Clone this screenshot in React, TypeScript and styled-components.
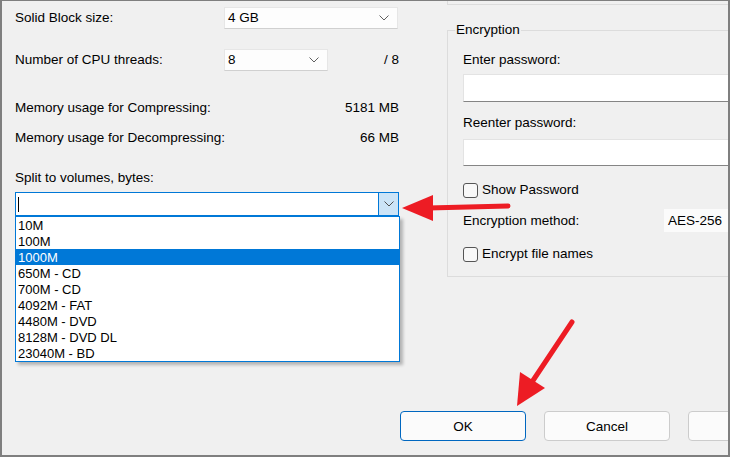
import React from "react";
import styled, { createGlobalStyle } from "styled-components";

const Global = createGlobalStyle`
  html, body { margin: 0; padding: 0; background: #f0f0f0; }
  * { box-sizing: border-box; }
`;

const Frame = styled.div`
  position: relative;
  width: 730px;
  height: 457px;
  overflow: hidden;
  background: #f0f0f0;
  border-style: solid;
  border-color: #7f7f7f;
  border-width: 1px 2px 2px 2px;
  font-family: "Liberation Sans", Arial, sans-serif;
  font-size: 13.5px;
  color: #000;
  display: flex;
  flex-direction: column;
`;

const Body = styled.div`
  display: flex;
  flex: 1;
`;

const LeftCol = styled.div`
  width: 384px;
  margin-left: 13px;
  padding-top: 6px;
  display: flex;
  flex-direction: column;
`;

const FieldRow = styled.div<{ $top: number }>`
  display: grid;
  grid-template-columns: 209px auto 1fr;
  align-items: center;
  height: 22px;
  margin-top: ${(p) => p.$top}px;
`;

const Label = styled.div`
  line-height: 16px;
  white-space: nowrap;
`;

const Select = styled.div<{ $w: number }>`
  width: ${(p) => p.$w}px;
  height: 22px;
  background: #fdfdfd;
  border: 1px solid #e6e6e6;
  border-bottom-color: #d0d0d0;
  display: flex;
  align-items: center;
  justify-content: space-between;
  padding: 0 8px 0 3px;
  line-height: 16px;
`;

const RightValue = styled.div`
  text-align: right;
  line-height: 16px;
`;

const InfoRow = styled.div<{ $top: number }>`
  display: flex;
  justify-content: space-between;
  height: 16px;
  line-height: 16px;
  margin-top: ${(p) => p.$top}px;
`;

const SectionLabel = styled(Label)`
  margin-top: 24px;
`;

const Combo = styled.div`
  margin-top: 6px;
  height: 24px;
  border: 1px solid #0078d7;
  background: #fff;
  display: flex;
  align-items: center;
`;

const Caret = styled.span`
  width: 1px;
  height: 15px;
  background: #000;
  margin-left: 2px;
`;

const ComboButton = styled.div`
  margin-left: auto;
  width: 20px;
  height: 22px;
  background: #cce4f7;
  border-left: 1px solid #0078d7;
  display: flex;
  align-items: center;
  justify-content: center;
`;

const List = styled.div`
  width: 385px;
  height: 146px;
  border: 1px solid #0078d7;
  background: #fff;
  box-shadow: 3px 3px 3px rgba(0, 0, 0, 0.25);
  font-size: 13px;
`;

const Item = styled.div<{ $sel?: boolean }>`
  height: 16px;
  line-height: 15px;
  padding: 1px 0 0 2px;
  background: ${(p) => (p.$sel ? "#0078d7" : "transparent")};
  color: ${(p) => (p.$sel ? "#fff" : "#000")};
`;

const RightCol = styled.div`
  margin-left: 48px;
  flex: 1;
  display: flex;
  flex-direction: column;
`;

const PrevGroup = styled.div`
  width: 400px;
  height: 4px;
  border-left: 1px solid #dcdcdc;
  border-bottom: 1px solid #dcdcdc;
`;

const Group = styled.fieldset`
  margin: 17px 0 0 0;
  width: 400px;
  min-width: 0;
  border: 1px solid #dcdcdc;
  padding: 0 15px 14px 15px;
  display: flex;
  flex-direction: column;
`;

const Legend = styled.legend`
  padding: 0 1px;
  margin-left: -8px;
  line-height: 16px;
`;

const GroupLabel = styled.div<{ $top: number }>`
  line-height: 16px;
  padding-top: 1px;
  height: 16px;
  margin-top: ${(p) => p.$top}px;
`;

const TextInput = styled.div<{ $top: number; $h: number }>`
  margin-top: ${(p) => p.$top}px;
  height: ${(p) => p.$h}px;
  background: #fff;
  border: 1px solid #e3e3e3;
  border-bottom-color: #858585;
`;

const CheckRow = styled.div<{ $top: number }>`
  margin-top: ${(p) => p.$top}px;
  display: flex;
  align-items: center;
  gap: 4px;
  height: 16px;
  line-height: 16px;
`;

const Box = styled.span`
  width: 15px;
  height: 15px;
  border: 1px solid #555;
  border-radius: 3px;
  background: #f8f8f8;
`;

const MethodRow = styled.div`
  margin-top: 11px;
  display: grid;
  grid-template-columns: 201px 1fr;
  align-items: center;
  height: 23px;
`;

const MethodBox = styled.div`
  height: 23px;
  background: #fbfbfb;
  padding-left: 4px;
  line-height: 23px;
`;

const Footer = styled.div`
  display: flex;
  gap: 18px;
  padding: 0 0 14px 398px;
`;

const Button = styled.div<{ $primary?: boolean }>`
  flex: none;
  width: 126px;
  height: 30px;
  border-radius: 4px;
  background: #fbfbfb;
  border: 1px solid ${(p) => (p.$primary ? "#0067c0" : "#cccccc")};
  display: flex;
  align-items: center;
  justify-content: center;
  font-size: 13.5px;
`;

const Overlay = styled.svg`
  position: absolute;
  left: -2px;
  top: -1px;
  pointer-events: none;
`;

const Chevron = ({ color = "#606060" }: { color?: string }) => (
  <svg width="10" height="6" viewBox="0 0 10 6">
    <path d="M0.5 0.5 L5 5 L9.5 0.5" fill="none" stroke={color} strokeWidth="1" />
  </svg>
);

const items = [
  "10M",
  "100M",
  "1000M",
  "650M - CD",
  "700M - CD",
  "4092M - FAT",
  "4480M - DVD",
  "8128M - DVD DL",
  "23040M - BD",
];

export default function App() {
  return (
    <>
      <Global />
      <Frame>
        <Body>
          <LeftCol>
            <FieldRow $top={0}>
              <Label>Solid Block size:</Label>
              <Select $w={174}>
                <span>4 GB</span>
                <Chevron />
              </Select>
            </FieldRow>
            <FieldRow $top={20}>
              <Label>Number of CPU threads:</Label>
              <Select $w={104}>
                <span>8</span>
                <Chevron />
              </Select>
              <RightValue>/ 8</RightValue>
            </FieldRow>
            <InfoRow $top={29}>
              <span>Memory usage for Compressing:</span>
              <span>5181 MB</span>
            </InfoRow>
            <InfoRow $top={14}>
              <span>Memory usage for Decompressing:</span>
              <span>66 MB</span>
            </InfoRow>
            <SectionLabel>Split to volumes, bytes:</SectionLabel>
            <Combo>
              <Caret />
              <ComboButton>
                <Chevron color="#505050" />
              </ComboButton>
            </Combo>
            <List>
              {items.map((t) => (
                <Item key={t} $sel={t === "1000M"}>
                  {t}
                </Item>
              ))}
            </List>
          </LeftCol>
          <RightCol>
            <PrevGroup />
            <Group>
              <Legend>Encryption</Legend>
              <GroupLabel $top={13}>Enter password:</GroupLabel>
              <TextInput $top={7} $h={28} />
              <GroupLabel $top={12}>Reenter password:</GroupLabel>
              <TextInput $top={9} $h={27} />
              <CheckRow $top={16}>
                <Box />
                <span>Show Password</span>
              </CheckRow>
              <MethodRow>
                <span>Encryption method:</span>
                <MethodBox>AES-256</MethodBox>
              </MethodRow>
              <CheckRow $top={14}>
                <Box />
                <span>Encrypt file names</span>
              </CheckRow>
            </Group>
          </RightCol>
        </Body>
        <Footer>
          <Button $primary>OK</Button>
          <Button>Cancel</Button>
          <Button />
        </Footer>
        <Overlay width="730" height="457" viewBox="0 0 730 457">
          <line x1="508" y1="206" x2="428" y2="208" stroke="#ed1c24" strokeWidth="5" strokeLinecap="round" />
          <polygon points="402,208 433,195 433,221" fill="#ed1c24" />
          <line x1="572" y1="322" x2="532" y2="382" stroke="#ed1c24" strokeWidth="5" strokeLinecap="round" />
          <polygon points="517,406 520,372 545,388" fill="#ed1c24" />
        </Overlay>
      </Frame>
    </>
  );
}
